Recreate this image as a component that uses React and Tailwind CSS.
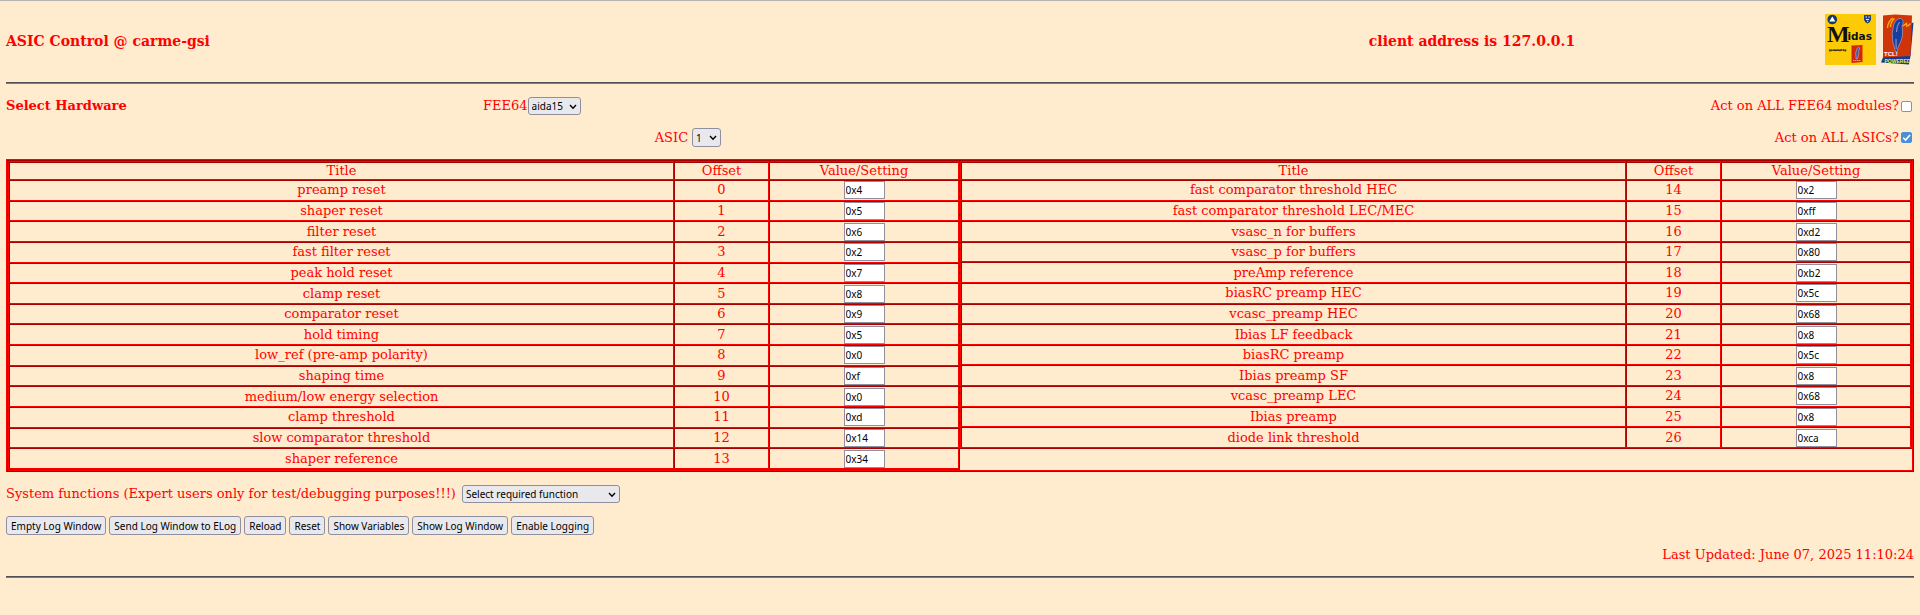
import React from "react";

const leftRows = [
  ["preamp reset", 0, "0x4"],
  ["shaper reset", 1, "0x5"],
  ["filter reset", 2, "0x6"],
  ["fast filter reset", 3, "0x2"],
  ["peak hold reset", 4, "0x7"],
  ["clamp reset", 5, "0x8"],
  ["comparator reset", 6, "0x9"],
  ["hold timing", 7, "0x5"],
  ["low_ref (pre-amp polarity)", 8, "0x0"],
  ["shaping time", 9, "0xf"],
  ["medium/low energy selection", 10, "0x0"],
  ["clamp threshold", 11, "0xd"],
  ["slow comparator threshold", 12, "0x14"],
  ["shaper reference", 13, "0x34"],
];

const rightRows = [
  ["fast comparator threshold HEC", 14, "0x2"],
  ["fast comparator threshold LEC/MEC", 15, "0xff"],
  ["vsasc_n for buffers", 16, "0xd2"],
  ["vsasc_p for buffers", 17, "0x80"],
  ["preAmp reference", 18, "0xb2"],
  ["biasRC preamp HEC", 19, "0x5c"],
  ["vcasc_preamp HEC", 20, "0x68"],
  ["Ibias LF feedback", 21, "0x8"],
  ["biasRC preamp", 22, "0x5c"],
  ["Ibias preamp SF", 23, "0x8"],
  ["vcasc_preamp LEC", 24, "0x68"],
  ["Ibias preamp", 25, "0x8"],
  ["diode link threshold", 26, "0xca"],
];

const buttons = [
  "Empty Log Window",
  "Send Log Window to ELog",
  "Reload",
  "Reset",
  "Show Variables",
  "Show Log Window",
  "Enable Logging",
];

const MidasLogo = () => (
  <svg viewBox="0 0 51 51" className="h-[51px] w-[51px]" aria-label="Midas">
    <rect width="51" height="51" fill="#fccb05" />
    <circle cx="7.3" cy="5.5" r="4.8" fill="#123a6b" />
    <path d="M7.3 2.5 L10.3 7.5 L4.3 7.5 Z" fill="#fff" />
    <path d="M39 1 H46 V5.5 Q45.5 8.5 42.5 9.5 Q39.5 8.5 39 5.5 Z" fill="#1c3f87" />
    <path d="M40.5 3 H42 M43.3 3 H44.8 M41 5.5 H44 M42 7.3 H43.2" stroke="#e8eefc" strokeWidth="1" />
    <text x="2" y="28" fontSize="24" fontWeight="700" fontFamily="Liberation Serif, serif" fill="#111">
      M
    </text>
    <text x="22.5" y="26" fontSize="10.5" fontWeight="700" fontFamily="DejaVu Sans, sans-serif" fill="#111">
      idas
    </text>
    <text x="4" y="37" fontSize="2.6" fontWeight="700" fontFamily="DejaVu Sans, sans-serif" fill="#111" stroke="#111" strokeWidth="0.2">
      powered by
    </text>
    <path d="M26.5 31.5 L37.5 31 L37.5 48 L26.5 49 Z" fill="#d3260b" />
    <path d="M31.2 45 Q29.8 38 32 34.5 Q34 32 34.8 34 Q33.6 36 33.6 39 Q33.6 42 32.3 45 Z" fill="#3e55ad" stroke="#f3c7bd" strokeWidth="0.5" />
    <path d="M28 46.5 H36" stroke="#f0a48c" strokeWidth="1.2" strokeDasharray="1.4 0.6" />
  </svg>
);

const TclLogo = () => (
  <svg viewBox="0 0 33 51" className="h-[51px] w-[33px]" aria-label="Tcl powered">
    <path d="M28 10 L32.5 8.5 L29.5 42 L28 50.5 L0 48.5 L2.5 42 Z" fill="#113c9c" />
    <path d="M2 1.5 L14 0.5 L31 1.5 L29.5 42 L2 43.5 Z" fill="#cf3506" />
    <path d="M6.5 14 Q7 7 12 4 M9.5 13 Q9.5 8 13.5 4.5 M22 12 L25.5 9.5 L26 13 M27 12 L29.5 9.5" fill="none" stroke="#fcb312" strokeWidth="1.3" />
    <path
      d="M14.5 38 Q13.5 33 11.8 28 Q10.3 19 12.6 11 Q15 4 20 4.5 Q23 6 22 9 Q20.5 12 21.5 16 Q22.3 22 20 27 Q17 32 15.8 38 Z"
      fill="#173f9f"
      stroke="#c9c3dc"
      strokeWidth="0.5"
    />
    <path d="M18.5 8 Q15.5 12 15.5 18 M15 25 Q15 30 15.2 35" fill="none" stroke="#dfe5f7" strokeWidth="0.6" />
    <text x="3" y="41.5" fontSize="6" fontWeight="700" fontFamily="Liberation Sans, sans-serif" fill="#fff">
      TCL!
    </text>
    <text x="3.5" y="48.8" fontSize="5" fontWeight="700" fontFamily="Liberation Sans, sans-serif" fill="#f5ea27">
      POWERED
    </text>
  </svg>
);

const Rule = ({ className = "" }) => (
  <hr className={"h-0 border-t border-b border-t-[#505058] border-b-[#7c7c7c] " + className} />
);

const Select = ({ id, value, className }) => (
  <span className="relative inline-flex">
    <select
      id={id}
      defaultValue={value}
      className={
        "appearance-none rounded-[3px] border border-[#8f8f9d] bg-[#e9e9ed] pl-[3px] font-['Noto_Sans',sans-serif] text-[10px] leading-4 text-black " +
        className
      }
    >
      <option>{value}</option>
    </select>
    <svg
      viewBox="0 0 8 6"
      className="pointer-events-none absolute right-1 top-[7px] h-[6px] w-2"
      fill="none"
      stroke="#000"
      strokeWidth="1.4"
    >
      <path d="M1 1 L4 4.2 L7 1" />
    </svg>
  </span>
);

const Checkbox = ({ id, label, checked }) => (
  <div className="flex items-center gap-[2px] pr-[2px]">
    <label htmlFor={id}>{label}</label>
    <span className="relative flex">
      <input
        id={id}
        type="checkbox"
        defaultChecked={checked}
        className="peer h-[11px] w-[11px] appearance-none rounded-[2px] border border-[#8f8f9d] bg-white checked:border-[#4a90d9] checked:bg-[#4a90d9]"
      />
      <svg
        viewBox="0 0 10 10"
        className="pointer-events-none absolute inset-0 hidden h-[11px] w-[11px] peer-checked:block"
        fill="none"
        stroke="#fff"
        strokeWidth="1.5"
      >
        <path d="M2 5.2 L4.2 7.4 L8.2 2.8" />
      </svg>
    </span>
  </div>
);

const cell = "border-2 border-[#ff0000] p-0 font-normal [border-style:ridge]";

const RegisterTable = ({ rows, className }) => (
  <table className={"w-full table-fixed border-collapse text-center " + className}>
    <colgroup>
      <col className="w-[70%]" />
      <col className="w-[10%]" />
      <col className="w-[20%]" />
    </colgroup>
    <thead>
      <tr className="h-[18px]">
        <th className={cell}>Title</th>
        <th className={cell}>Offset</th>
        <th className={cell}>Value/Setting</th>
      </tr>
    </thead>
    <tbody>
      {rows.map(([title, offset, value]) => (
        <tr key={offset}>
          <td className={cell}>{title}</td>
          <td className={cell}>{offset}</td>
          <td className={cell}>
            <input
              aria-label={title}
              defaultValue={value}
              className="mx-auto block h-[18px] w-[41px] border border-[#8f8f9d] bg-white px-px font-['Noto_Sans',sans-serif] text-[10px] text-black"
            />
          </td>
        </tr>
      ))}
    </tbody>
  </table>
);

export default function App() {
  return (
    <div className="min-h-screen border-t border-[#b4b4b4] bg-[#ffebcd] px-[6px] font-['DejaVu_Serif',serif] text-[13px] leading-4 text-[#ff0000]">
      <header className="grid grid-cols-[5fr_2fr] items-center pt-[13px] pb-[17px]">
        <h1 className="pt-[2px] text-[14px] font-bold">ASIC Control @ carme-gsi</h1>
        <div className="flex items-center justify-between">
          <h2 className="pt-[2px] text-[14px] font-bold">client address is 127.0.0.1</h2>
          <div className="flex gap-[5px]">
            <MidasLogo />
            <TclLogo />
          </div>
        </div>
      </header>
      <Rule />

      <div className="mt-[13px] grid grid-cols-[1fr_3fr] items-center">
        <h2 className="font-bold">Select Hardware</h2>
        <div className="flex items-center justify-between">
          <div className="flex items-center">
            <label htmlFor="fee64">FEE64</label>
            <Select id="fee64" value="aida15" className="h-[18px] w-[53px]" />
          </div>
          <Checkbox id="allFee" label="Act on ALL FEE64 modules?" />
        </div>
      </div>
      <div className="mt-[13px] grid grid-cols-[34fr_66fr] items-center">
        <div />
        <div className="flex items-center justify-between">
          <div className="flex items-center gap-1">
            <label htmlFor="asic">ASIC</label>
            <Select id="asic" value="1" className="h-[19px] w-[29px]" />
          </div>
          <Checkbox id="allAsic" label="Act on ALL ASICs?" checked />
        </div>
      </div>

      <div className="mt-3 grid grid-cols-2 items-start border-2 border-[#ff0000] [border-style:ridge]">
        <RegisterTable rows={leftRows} className="h-[309px]" />
        <RegisterTable rows={rightRows} className="h-[288px]" />
      </div>

      <div className="mt-[13px] flex items-center gap-1.5">
        <label htmlFor="fn">System functions (Expert users only for test/debugging purposes!!!)</label>
        <Select id="fn" value="Select required function" className="h-[18px] w-[158px]" />
      </div>
      <div className="mt-[13px] flex gap-[3px]">
        {buttons.map((label) => (
          <button
            key={label}
            className="h-[19px] rounded-[3px] border border-[#8f8f9d] bg-[#e9e9ed] px-1 font-['Noto_Sans',sans-serif] text-[10px] leading-4 text-black"
          >
            {label}
          </button>
        ))}
      </div>
      <p className="mt-3 text-right">Last Updated: June 07, 2025 11:10:24</p>
      <Rule className="mt-[13px]" />
    </div>
  );
}
